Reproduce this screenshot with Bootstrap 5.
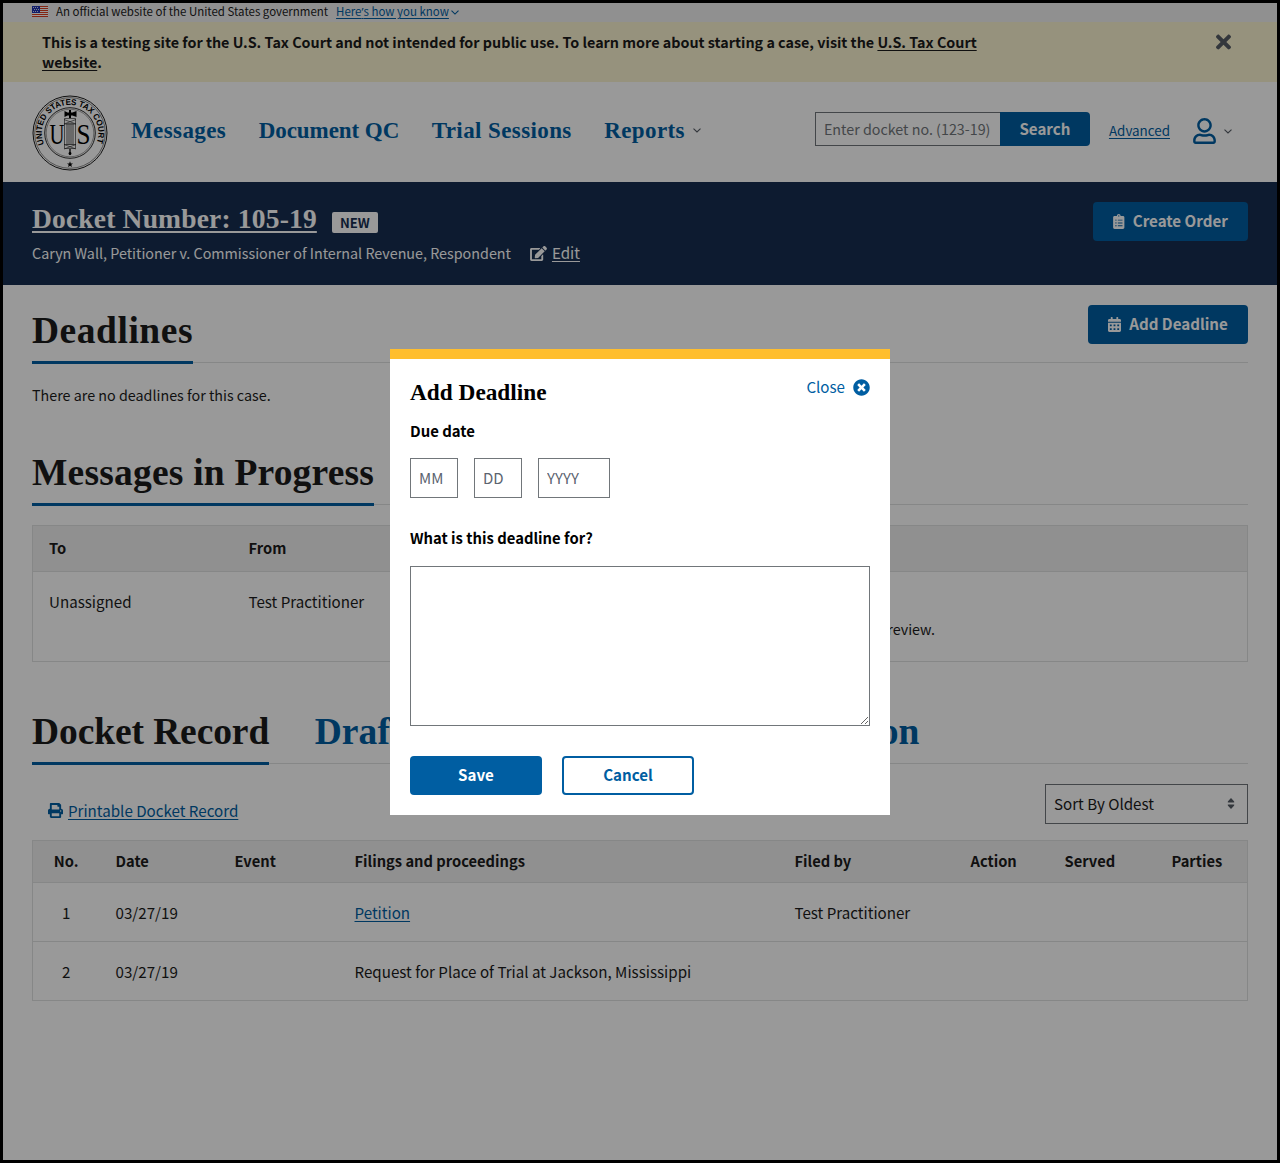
<!DOCTYPE html>
<html lang="en">
<head>
<meta charset="utf-8">
<meta name="viewport" content="width=device-width, initial-scale=1">
<title>Docket Number: 105-19 | U.S. Tax Court</title>
<link rel="stylesheet" href="https://cdn.jsdelivr.net/npm/bootstrap@5.3.0/dist/css/bootstrap.min.css">
<style>
  :root { --blue:#005ea2; --navy:#162e51; --ink:#1b1b1b; --line:#dfe1e2; --edge:#71767a; }
  body { font-family:"Noto Sans CJK SC","Source Sans Pro",sans-serif; font-size:15.15px; line-height:20px; color:var(--ink); }
  a { color:var(--blue); text-underline-offset:2px; }
  svg { display:block; flex:none; }
  .serif { font-family:"Source Serif Pro","Liberation Serif",serif; font-weight:700; }
  .text-sm15 { font-size:14.32px; }
  .page-frame { border:3px solid #000; height:1163px; overflow:hidden; background:#fff; }
  .gutter { padding-left:29px; padding-right:29px; }
  .gov-bar { height:19px; background:#f0f0f0; font-size:11.47px; line-height:16px; padding-bottom:2px; }
  .gov-bar > span { margin-top:-2px; }
  .gov-bar a { margin-left:8px; }
  .apos { font-family:"Noto Sans",sans-serif; }
  .test-bar { height:60px; background:#faf3d1; padding:10px 46px 0 39px; font-weight:700; font-size:14.33px; }
  .test-bar p { width:940px; }
  .test-bar a { color:var(--ink); }
  .site-head { height:100px; }
  .main-nav { font-size:23px; gap:32.5px; margin-left:23px; line-height:30px; padding-bottom:3px; }
  .main-nav a { text-decoration:none; letter-spacing:.4px; }
  .main-nav a:nth-child(2) { letter-spacing:-.06px; }
  .search-field { width:185px; height:34px; border:1px solid var(--edge); border-right:0; border-radius:0; padding:0 8px 2px; font-size:14.3px; background:#fff; line-height:20px; }
  .search-field::placeholder { color:#71767a; opacity:1; }
  .btn-court, .btn-court:hover { background:var(--blue); color:#fff; font-weight:700; font-size:15.13px; line-height:20px; border:0; border-radius:4px; padding:0 0 3px; height:39px; }
  .btn-court svg { margin-top:2px; }
  .btn-search { width:90px; height:34px; border-radius:0 4px 4px 0; }
  .case-bar { height:103px; background:var(--navy); color:#fff; padding-top:20px; }
  .case-bar a { color:#fff; }
  .case-title { font-size:27.5px; line-height:34px; letter-spacing:.18px; text-underline-offset:3px; }
  .tag-new { background:#fff; color:var(--navy); font-size:13.1px; font-weight:700; border-radius:2px; width:46px; height:21px; line-height:21px; margin:7px 0 0 15px; }
  .tab-strip { border-bottom:1px solid var(--line); gap:46px; font-size:37.5px; line-height:50px; }
  .tab-strip h2, .tab-strip a { font-size:inherit; line-height:inherit; margin:0 0 -2px; padding:1px 0 5px; border-bottom:3px solid transparent; text-decoration:none; letter-spacing:0; }
  .tab-strip .current { border-color:var(--blue); }
  .court-table { table-layout:fixed; border:1px solid var(--line); border-collapse:collapse; width:1216px; color:var(--ink); }
  .court-table th { background:#f0f0f0; font-weight:700; font-size:14.7px; vertical-align:middle; padding:0 0 2px 16px; border-bottom:1px solid var(--line); }
  .court-table td { vertical-align:middle; padding:0 0 0 16px; border-bottom:1px solid var(--line); }
  .court-table .num { padding-left:0; text-align:center; }
  .court-table td.msg-cell { vertical-align:top; padding-top:15px; line-height:28px; }
  .sort-box { width:203px; height:40px; border:1px solid var(--edge); padding:0 12px 2px 8px; }
  .modal.deadline { z-index:1056; }
  .deadline .modal-dialog { width:500px; max-width:500px; margin:349px auto 0; }
  .deadline .modal-content { height:466px; border:0; border-top:10px solid #ffbe2e; border-radius:0; padding:17px 20px 20px; color:#000; }
  .deadline h3 { font-size:23.3px; line-height:32px; margin:0; }
  .deadline .btn-court { width:132px; }
  .deadline .btn-hollow { background:#fff; color:var(--blue); border:2px solid var(--blue); }
  .date-field { width:48px; height:40px; border:1px solid var(--edge); border-radius:0; padding:0 8px 2px; font-size:15px; line-height:20px; }
  .date-field::placeholder { color:#5c6470; opacity:1; }
  .date-field.year { width:72px; }
  .deadline textarea { display:block; width:100%; height:160px; border:1px solid var(--edge); border-radius:0; }
  .shade { position:fixed; inset:0; z-index:1050; background:rgba(0,0,0,.4); }
</style>
</head>
<body>
<div class="page-frame">
  <div class="gov-bar gutter d-flex align-items-center">
    <svg width="16" height="11" viewBox="0 0 16 11" class="me-2"><path fill="#fff" d="M0 0h16v11H0z"/><path stroke="#db3e1f" d="M0 .5h16M0 2.5h16M0 4.5h16M0 6.5h16M0 8.5h16M0 10.5h16"/><path fill="#1e33b1" d="M0 0h8v7H0z"/><path stroke="#fff" stroke-width=".8" stroke-dasharray="1 1" d="M1 1.5h6M2 3.5h5M1 5.5h6"/></svg>
    <span>An official website of the United States government</span>
    <a href="#">Here<span class="apos">’</span>s how you know</a>
    <svg width="8" height="5" viewBox="0 0 8 5" style="margin:2px 0 0 2px"><path d="M.5.7 4 4.1 7.5.7" fill="none" stroke="#005ea2" stroke-width="1.1"/></svg>
  </div>

  <div class="test-bar d-flex justify-content-between align-items-start">
    <p class="mb-0">This is a testing site for the U.S. Tax Court and not intended for public use. To learn more about starting a case, visit the <a href="#">U.S. Tax Court website</a>.</p>
    <svg width="15" height="22" viewBox="0 0 352 512" fill="#565c65" style="margin-top:-1.5px"><path d="M242.72 256l100.07-100.07c12.28-12.28 12.28-32.19 0-44.48l-22.24-22.24c-12.28-12.28-32.19-12.28-44.48 0L176 189.28 75.93 89.21c-12.28-12.28-32.19-12.28-44.48 0L9.21 111.45c-12.28 12.28-12.28 32.19 0 44.48L109.28 256 9.21 356.07c-12.28 12.28-12.28 32.19 0 44.48l22.24 22.24c12.28 12.28 32.2 12.28 44.48 0L176 322.72l100.07 100.07c12.28 12.28 32.2 12.28 44.48 0l22.24-22.24c12.28-12.28 12.28-32.19 0-44.48L242.72 256z"/></svg>
  </div>

  <header class="site-head gutter d-flex align-items-center">
    <svg width="76" height="76" viewBox="-38 -38 76 76" fill="none" stroke="#1b1b1b" style="margin-top:1px">
      <circle r="37" stroke-width="1"/><circle r="35.3" stroke-width=".5"/>
      <circle r="25.3" stroke-width=".9"/><circle r="23.8" stroke-width=".4"/>
      <path id="ring" d="M-26 11.2A28.3 28.3 0 1 1 26 11.2" stroke="none"/>
      <text fill="#000" stroke="none" font-family="Liberation Sans, sans-serif" font-weight="700" font-size="8.4"><textPath href="#ring" textLength="110" lengthAdjust="spacingAndGlyphs">UNITED STATES TAX COURT</textPath></text>
      <g fill="#000" stroke="none" font-family="Liberation Serif, serif" font-size="29"><text x="-20.5" y="10.5" textLength="15" lengthAdjust="spacingAndGlyphs">U</text><text x="6.5" y="10.5" textLength="14" lengthAdjust="spacingAndGlyphs">S</text></g>
      <path d="M-5.5-14.5h11v30h-11z" fill="#fff" stroke-width=".6"/>
      <path d="M-3-10v22M-1-10v22M1-10v22M3-10v22" stroke-width=".7"/>
      <path d="M-6-13.5 6-9M-6-9 6-13.5M-6 11.5 6 16M-6 16 6 11.5M-6-9H6M-6 11.5H6" stroke-width=".6"/>
      <path d="M-5.5-22l3 1.5h1.5v-2.5h2v2.5h1.500l4-1.5v6l-4-1.5h-1.5v2.5h-2v-2.5h-1.5l-3 1.5z" fill="#000" stroke="none"/>
      <path d="M0 16v6" stroke="#000" stroke-width="1.3"/><circle cy="20.5" r="1.4" fill="#000" stroke="none"/>
      <path d="M0 28.300l.8 2.100h2.200l-1.700 1.400.6 2.200L0 32.700l-1.900 1.300.6-2.200-1.700-1.400h2.200z" fill="#000" stroke="none"/>
    </svg>
    <nav class="main-nav serif d-flex">
      <a href="#">Messages</a>
      <a href="#">Document QC</a>
      <a href="#">Trial Sessions</a>
      <a href="#" class="d-flex align-items-center">Reports<svg width="8" height="5" viewBox="0 0 8 5" class="ms-2"><path d="M.5.6 4 4 7.5.6" fill="none" stroke="#565c65" stroke-width="1.1"/></svg></a>
    </nav>
    <form class="d-flex ms-auto" style="margin-bottom:6px">
      <input class="search-field" type="text" placeholder="Enter docket no. (123-19)" aria-label="Docket number">
      <button class="btn btn-court btn-search" type="button">Search</button>
    </form>
    <a href="#" style="font-size:13.4px;margin:0 23px 5px 19px">Advanced</a>
    <svg width="23" height="26" viewBox="0 0 448 512" fill="#005ea2" style="margin-bottom:2px"><path d="M313.6 304c-28.7 0-42.5 16-89.6 16-47.1 0-60.8-16-89.6-16C60.2 304 0 364.2 0 438.4V464c0 26.5 21.5 48 48 48h352c26.5 0 48-21.5 48-48v-25.6c0-74.2-60.2-134.4-134.4-134.4zM400 464H48v-25.6c0-47.6 38.8-86.4 86.4-86.4 14.6 0 38.3 16 89.6 16 51.7 0 74.9-16 89.6-16 47.6 0 86.4 38.8 86.4 86.4V464zM224 288c79.5 0 144-64.5 144-144S303.5 0 224 0 80 64.5 80 144s64.5 144 144 144zm0-240c52.9 0 96 43.1 96 96s-43.1 96-96 96-96-43.1-96-96 43.1-96 96-96z"/></svg>
    <svg width="8" height="5" viewBox="0 0 8 5" style="margin:0 16px 2px 8px"><path d="M.5.6 4 4 7.5.6" fill="none" stroke="#565c65" stroke-width="1.1"/></svg>
  </header>

  <section class="case-bar gutter d-flex justify-content-between">
    <div>
      <div class="d-flex align-items-center" style="height:34px">
        <a href="#" class="case-title serif">Docket Number: 105-19</a>
        <span class="tag-new text-center"><span style="letter-spacing:-.1px">NEW</span></span>
      </div>
      <div class="d-flex align-items-center" style="margin-top:7px">
        <span class="text-sm15">Caryn Wall, Petitioner v. Commissioner of Internal Revenue, Respondent</span>
        <svg width="17" height="15" viewBox="0 0 576 512" fill="#fff" style="margin:0 5px 0 19px"><path d="M402.6 83.2l90.2 90.2c3.8 3.8 3.8 10 0 13.8L274.4 405.6l-92.8 10.3c-12.4 1.4-22.9-9.1-21.5-21.5l10.3-92.8L388.8 83.2c3.8-3.8 10-3.8 13.8 0zm162-22.9l-48.8-48.8c-15.2-15.2-39.9-15.2-55.2 0l-35.4 35.4c-3.8 3.8-3.8 10 0 13.8l90.2 90.2c3.8 3.8 10 3.8 13.8 0l35.4-35.4c15.2-15.3 15.2-40 0-55.2zM384 346.2V448H64V128h229.8c3.2 0 6.2-1.3 8.5-3.5l40-40c7.6-7.6 2.2-20.5-8.5-20.5H48C21.5 64 0 85.5 0 112v352c0 26.5 21.5 48 48 48h352c26.5 0 48-21.5 48-48V306.2c0-10.7-12.9-16-20.5-8.5l-40 40c-2.2 2.3-3.5 5.3-3.5 8.5z"/></svg>
        <a href="#" style="margin-top:-2px">Edit</a>
      </div>
    </div>
    <button class="btn btn-court d-flex align-items-center justify-content-center" style="width:155px" type="button">
      <svg width="11.5" height="15" viewBox="0 0 384 512" fill="#fff" class="me-2"><path d="M336 64h-80c0-35.3-28.7-64-64-64s-64 28.7-64 64H48C21.5 64 0 85.5 0 112v352c0 26.5 21.5 48 48 48h288c26.5 0 48-21.5 48-48V112c0-26.5-21.5-48-48-48zM96 424c-13.3 0-24-10.7-24-24s10.7-24 24-24 24 10.7 24 24-10.7 24-24 24zm0-96c-13.3 0-24-10.7-24-24s10.7-24 24-24 24 10.7 24 24-10.7 24-24 24zm0-96c-13.3 0-24-10.7-24-24s10.7-24 24-24 24 10.7 24 24-10.7 24-24 24zm96-192c13.3 0 24 10.7 24 24s-10.7 24-24 24-24-10.7-24-24 10.7-24 24-24zm128 368c0 4.4-3.6 8-8 8H168c-4.4 0-8-3.6-8-8v-16c0-4.4 3.6-8 8-8h144c4.4 0 8 3.6 8 8v16zm0-96c0 4.4-3.6 8-8 8H168c-4.4 0-8-3.6-8-8v-16c0-4.4 3.6-8 8-8h144c4.4 0 8 3.6 8 8v16zm0-96c0 4.4-3.6 8-8 8H168c-4.4 0-8-3.6-8-8v-16c0-4.4 3.6-8 8-8h144c4.4 0 8 3.6 8 8v16z"/></svg>Create Order
    </button>
  </section>

  <main class="gutter">
    <div class="tab-strip serif d-flex justify-content-between" style="padding-top:20px">
      <h2 class="current serif" style="letter-spacing:.53px">Deadlines</h2>
      <button class="btn btn-court d-flex align-items-center justify-content-center" style="width:160px;font-family:'Noto Sans CJK SC',sans-serif" type="button">
        <svg width="13" height="15" viewBox="0 0 448 512" fill="#fff" class="me-2"><path d="M0 464c0 26.5 21.5 48 48 48h352c26.5 0 48-21.5 48-48V192H0v272zm320-196c0-6.6 5.4-12 12-12h40c6.6 0 12 5.4 12 12v40c0 6.6-5.4 12-12 12h-40c-6.6 0-12-5.4-12-12v-40zm0 128c0-6.6 5.4-12 12-12h40c6.6 0 12 5.4 12 12v40c0 6.6-5.4 12-12 12h-40c-6.6 0-12-5.4-12-12v-40zM192 268c0-6.6 5.4-12 12-12h40c6.6 0 12 5.4 12 12v40c0 6.6-5.4 12-12 12h-40c-6.6 0-12-5.4-12-12v-40zm0 128c0-6.6 5.4-12 12-12h40c6.6 0 12 5.4 12 12v40c0 6.6-5.4 12-12 12h-40c-6.6 0-12-5.4-12-12v-40zM64 268c0-6.6 5.4-12 12-12h40c6.6 0 12 5.4 12 12v40c0 6.6-5.4 12-12 12H76c-6.6 0-12-5.4-12-12v-40zm0 128c0-6.6 5.4-12 12-12h40c6.6 0 12 5.4 12 12v40c0 6.6-5.4 12-12 12H76c-6.6 0-12-5.4-12-12v-40zM400 64h-48V16c0-8.8-7.2-16-16-16h-32c-8.8 0-16 7.2-16 16v48H160V16c0-8.8-7.2-16-16-16h-32c-8.8 0-16 7.2-16 16v48H48C21.5 64 0 85.5 0 112v48h448v-48c0-26.5-21.5-48-48-48z"/></svg>Add Deadline
      </button>
    </div>
    <p class="text-sm15 mb-0" style="padding:22px 0 42px">There are no deadlines for this case.</p>

    <div class="tab-strip serif d-flex"><h2 class="current serif" style="letter-spacing:.2px">Messages in Progress</h2></div>
    <table class="court-table" style="margin-top:20px">
      <colgroup><col style="width:200px"><col style="width:201px"><col style="width:128px"><col></colgroup>
      <thead><tr style="height:46px"><th>To</th><th>From</th><th>Received</th><th>Message</th></tr></thead>
      <tbody><tr style="height:90px"><td class="msg-cell">Unassigned</td><td class="msg-cell">Test Practitioner</td><td class="msg-cell">03/27/19</td><td class="msg-cell"><a href="#">Petition</a><div class="text-sm15" style="padding-left:1px">A Petition filed by Test Practitioner is ready for review.</div></td></tr></tbody>
    </table>

    <div class="tab-strip serif d-flex" style="margin-top:44px">
      <h2 class="current serif" style="letter-spacing:-.1px">Docket Record</h2>
      <a href="#" style="letter-spacing:.1px;margin-left:-.5px">Draft Documents</a>
      <a href="#" style="margin-left:-1px">Case Information</a>
    </div>
    <div class="d-flex justify-content-between align-items-start" style="padding:20px 0 16px">
      <div class="d-flex align-items-center" style="padding:16px 0 0 16px">
        <svg width="15" height="15" viewBox="0 0 512 512" fill="#005ea2"><path d="M448 192V77.25c0-8.49-3.37-16.62-9.37-22.63L393.37 9.37c-6-6-14.14-9.37-22.63-9.37H96C78.33 0 64 14.33 64 32v160c-35.35 0-64 28.65-64 64v112c0 8.84 7.16 16 16 16h48v96c0 17.67 14.33 32 32 32h320c17.67 0 32-14.33 32-32v-96h48c8.84 0 16-7.16 16-16V256c0-35.35-28.65-64-64-64zm-64 256H128v-96h256v96zm0-224H128V64h192v48c0 8.84 7.16 16 16 16h48v96zm48 72c-13.25 0-24-10.75-24-24 0-13.26 10.75-24 24-24s24 10.74 24 24c0 13.25-10.75 24-24 24z"/></svg>
        <a href="#" style="margin-left:5px">Printable Docket Record</a>
      </div>
      <div class="sort-box d-flex align-items-center justify-content-between">Sort By Oldest
        <svg width="8" height="11" viewBox="0 0 8 11" fill="#565c65"><path d="M4 0l3 3.200q1 1.300-.5 1.300h-5Q0 4.500 1 3.200zM4 11l3-3.200q1-1.300-.5-1.300h-5Q0 6.500 1 7.800z"/></svg>
      </div>
    </div>
    <table class="court-table">
      <colgroup><col style="width:67px"><col style="width:119px"><col style="width:120px"><col style="width:440px"><col style="width:176px"><col style="width:94px"><col style="width:107px"><col></colgroup>
      <thead><tr style="height:42px"><th class="num">No.</th><th>Date</th><th>Event</th><th>Filings and proceedings</th><th>Filed by</th><th>Action</th><th>Served</th><th>Parties</th></tr></thead>
      <tbody>
        <tr style="height:59px"><td class="num">1</td><td>03/27/19</td><td></td><td><a href="#">Petition</a></td><td>Test Practitioner</td><td></td><td></td><td></td></tr>
        <tr style="height:59px"><td class="num">2</td><td>03/27/19</td><td></td><td>Request for Place of Trial at Jackson, Mississippi</td><td></td><td></td><td></td><td></td></tr>
      </tbody>
    </table>
  </main>
</div>

<div class="shade"></div>
<div class="modal deadline d-block" tabindex="-1" role="dialog" aria-label="Add Deadline">
  <div class="modal-dialog">
    <div class="modal-content">
      <div class="d-flex justify-content-between align-items-start">
        <h3 class="serif">Add Deadline</h3>
        <a href="#" class="d-flex align-items-center text-decoration-none">Close
          <svg width="17" height="17" viewBox="0 0 512 512" fill="#005ea2" class="ms-2" style="margin-top:2px"><path d="M256 8C119 8 8 119 8 256s111 248 248 248 248-111 248-248S393 8 256 8zm121.6 313.1c4.7 4.7 4.7 12.3 0 17L338 377.6c-4.7 4.7-12.3 4.7-17 0L256 312l-65.1 65.6c-4.7 4.7-12.3 4.7-17 0L134.4 338c-4.7-4.7-4.7-12.3 0-17l65.6-65-65.6-65.1c-4.7-4.7-4.7-12.3 0-17l39.6-39.6c4.7-4.7 12.3-4.7 17 0l65 65.7 65.1-65.6c4.7-4.7 12.3-4.7 17 0l39.6 39.6c4.7 4.7 4.7 12.3 0 17L312 256l65.6 65.1z"/></svg>
        </a>
      </div>
      <div class="fw-bold" style="margin:13px 0 17px;font-size:14.92px">Due date</div>
      <div class="d-flex gap-3">
        <input class="date-field" type="text" placeholder="MM" aria-label="Month">
        <input class="date-field" type="text" placeholder="DD" aria-label="Day">
        <input class="date-field year" type="text" placeholder="YYYY" aria-label="Year">
      </div>
      <div class="fw-bold" style="margin:30px 0 18px;font-size:14.82px">What is this deadline for?</div>
      <textarea aria-label="Deadline description"></textarea>
      <div class="d-flex" style="gap:20px;margin-top:30px">
        <button class="btn btn-court" type="button">Save</button>
        <button class="btn btn-court btn-hollow" type="button">Cancel</button>
      </div>
    </div>
  </div>
</div>
<script src="https://cdn.jsdelivr.net/npm/bootstrap@5.3.0/dist/js/bootstrap.bundle.min.js"></script>
</body>
</html>
